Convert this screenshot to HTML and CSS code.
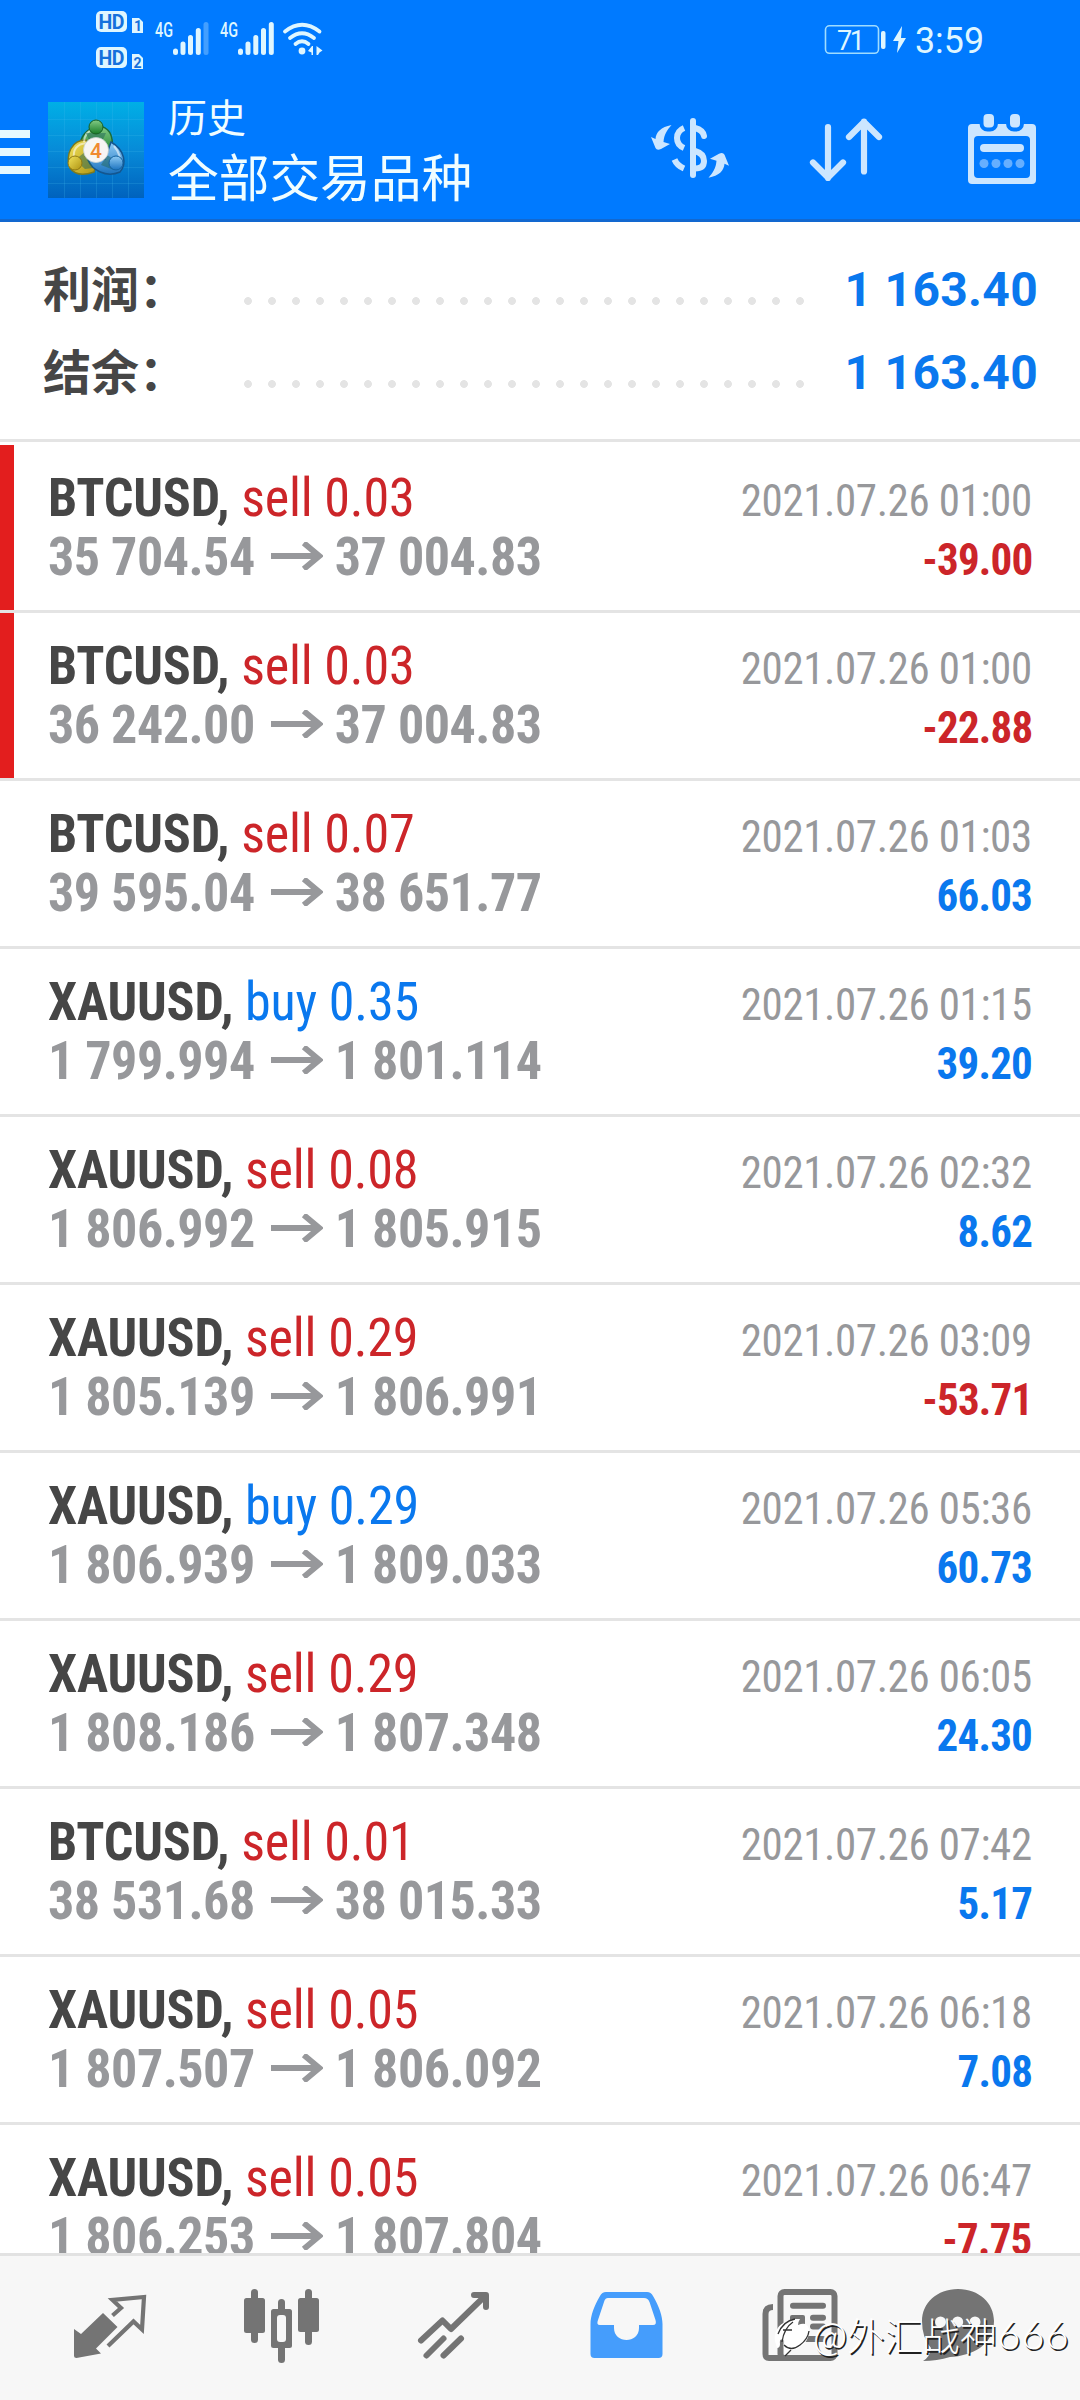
FILE: index.html
```html
<!DOCTYPE html>
<html lang="zh-CN">
<head>
<meta charset="utf-8">
<title>历史</title>
<link rel="stylesheet" href="styles.css">
</head>
<body>
<div class="screen">
<header class="top">
  <div class="status">
    <svg class="status-left" viewBox="90 0 240 80" width="240" height="80">
      <g fill="#dff6ff">
        <rect x="96" y="11" width="31" height="21" rx="5"/><path d="M132 18h7l4 4v11h-11z"/>
        <rect x="96" y="47" width="31" height="21" rx="5"/><path d="M132 54h7l4 4v11h-11z"/>
      </g>
      <g class="badge"><text x="98.500" y="28.500" textLength="26">HD</text><text x="98.500" y="64.500" textLength="26">HD</text></g>
      <g class="badge-sim"><text x="134" y="31">1</text><text x="133.500" y="67.500">2</text></g>
      <g class="net"><text x="155" y="37" textLength="18" lengthAdjust="spacingAndGlyphs">4G</text><text x="220" y="37" textLength="18" lengthAdjust="spacingAndGlyphs">4G</text></g>
      <g stroke="#dff6ff" stroke-width="5" stroke-linecap="round">
        <path d="M175.500 51v1.500M183 44v8.500M190.500 37.500v15M198.300 30.500v22"/>
        <path d="M206 24.500v28" opacity=".3"/>
        <path d="M240.500 51v1.500M248 44v8.500M255.800 37.500v15M263.500 30.500v22M271.300 24.500v28"/>
      </g>
      <g fill="none" stroke="#dff6ff" stroke-width="3.800" stroke-linecap="round">
        <path d="M285 31.500Q302 18 319.500 31.500M290 38Q302 28.500 314 38M295.500 44Q302 38.500 308.500 44"/>
      </g>
      <circle cx="302" cy="51" r="3.400" fill="#dff6ff"/>
      <path d="M313 46v9h-1.500v-2.500L308 51l4-5zM316.500 46l6 4.500-3 2-1.500 2.500h-1.500z" fill="#dff6ff"/>
    </svg>
    <svg class="status-right" viewBox="820 0 170 80" width="170" height="80">
      <rect x="825.500" y="25.800" width="53" height="27.500" rx="4" fill="none" stroke="#9fdcff" stroke-width="1.600"/>
      <rect x="881" y="31" width="4.500" height="18" rx="2" fill="#dff6ff"/>
      <path d="M902 26l-9 15h5.500l-1.500 12 9-15h-5z" fill="#dff6ff"/>
      <text class="battery" x="837" y="49.500" textLength="28">71</text>
      <text class="clock" x="915" y="53" textLength="69" lengthAdjust="spacingAndGlyphs">3:59</text>
    </svg>
  </div>
  <div class="bar">
    <div class="menu"><i></i><i></i><i></i></div>
    <svg class="logo" viewBox="0 0 96 96" width="96" height="96">
      <defs>
        <linearGradient id="sky" x1="0" y1="0" x2="0" y2="1"><stop offset="0" stop-color="#00afe6"/><stop offset=".5" stop-color="#078bd8"/><stop offset="1" stop-color="#0062bd"/></linearGradient>
        <linearGradient id="green" x1="0" y1="0" x2="0" y2="1"><stop offset="0" stop-color="#83cb86"/><stop offset="1" stop-color="#197d28"/></linearGradient>
        <linearGradient id="gold" x1="0" y1="0" x2="1" y2="1"><stop offset="0" stop-color="#f3e45b"/><stop offset="1" stop-color="#ad9212"/></linearGradient>
        <linearGradient id="azure" x1="0" y1="0" x2="0" y2="1"><stop offset="0" stop-color="#8ecbf4"/><stop offset="1" stop-color="#1c73bf"/></linearGradient>
      </defs>
      <rect width="96" height="96" fill="url(#sky)"/>
      <path d="M16.500 0v96M32.500 0v96M48.500 0v96M64.500 0v96M80.500 0v96M0 17.500h96M0 33.500h96M0 49.500h96M0 65.500h96M0 81.500h96" stroke="#45b9ee" stroke-opacity=".22"/>
      <path d="M32 49C29 25 60 14 64 37Q66 46 58 53L48 42z" fill="url(#green)" stroke="#1b6b3a" stroke-width="1.500"/>
      <path d="M38 38C24 38 17 52 22 66Q29 76 46 70L50 57z" fill="url(#gold)" stroke="#7d7a1d" stroke-width="1.500"/>
      <path d="M63 40C77 48 79 62 72 70C58 76 44 68 40 58L57 57z" fill="url(#azure)" stroke="#14568f" stroke-width="1.500"/>
      <path d="M36 40Q37 29 46 27M26 57Q24 43 38 41M66 44Q74 53 72 65" fill="none" stroke="#fff" stroke-opacity=".55" stroke-width="2"/>
      <path d="M38 31h20l-7 15H44zM27 58l10-8 8 16-8 1zM70 60l-11-7-6 10 13 5z" fill="#21665a" fill-opacity=".5"/>
      <circle cx="48" cy="25" r="7" fill="url(#green)" stroke="#176024"/>
      <circle cx="27" cy="61" r="7" fill="url(#gold)" stroke="#8f7912"/>
      <circle cx="68" cy="61" r="7" fill="url(#azure)" stroke="#1463a2"/>
      <circle cx="48" cy="48" r="12.500" fill="#f7f5f3" stroke="#c7d2d2" stroke-width=".8"/>
      <text class="logo-four" x="48" y="55.500" text-anchor="middle">4</text>
    </svg>
    <div class="titles"><div class="title">历史</div><div class="subtitle">全部交易品种</div></div>
    <svg class="tool" viewBox="640 100 100 100" width="100" height="100">
      <g fill="none" stroke="#cce6ff" stroke-width="6">
        <path d="M693 121v54" stroke-linecap="round"/>
        <path d="M684 128Q677 131 677 138T684 148M674.500 159.500Q677 165.500 684 168.500"/>
        <path d="M695 128Q703 130 704 136M695 151Q704 153.500 704 161T695 168.500" stroke-linecap="round"/>
      </g>
      <path d="M671.500 125C661 127 656 132 655.500 139L651 137L655.500 148Q657 151 661 149L670 144L663.500 142C664 135 667 130 671.500 125z" fill="#cce6ff"/>
      <path transform="rotate(180 690 151.350)" d="M671.500 125C661 127 656 132 655.500 139L651 137L655.500 148Q657 151 661 149L670 144L663.500 142C664 135 667 130 671.500 125z" fill="#cce6ff"/>
    </svg>
    <svg class="tool" viewBox="796 100 100 100" width="100" height="100">
      <path d="M828 127v51M813 162.500l15 15 15-15M864 171.500v-50M849 137l15-15 15 15" fill="none" stroke="#cce6ff" stroke-width="6.200" stroke-linecap="round" stroke-linejoin="round"/>
    </svg>
    <svg class="tool" viewBox="952 100 100 100" width="100" height="100">
      <path fill-rule="evenodd" d="M972 124h60q4 0 4 4v52q0 4-4 4h-60q-4 0-4-4v-52q0-4 4-4zM978 136q-4 0-4 4v34q0 4 4 4h48q4 0 4-4v-34q0-4-4-4z" fill="#cce6ff"/>
      <g fill="#cce6ff" stroke="#007aff" stroke-width="4"><rect x="981.500" y="112" width="14.500" height="17.500" rx="6"/><rect x="1008" y="112" width="14" height="17.500" rx="6"/></g>
      <rect x="980" y="144" width="44" height="8" rx="4" fill="#cce6ff"/>
      <g fill="#66afff"><circle cx="984" cy="163.500" r="4.500"/><circle cx="996" cy="163.500" r="4.500"/><circle cx="1008" cy="163.500" r="4.500"/><circle cx="1020" cy="163.500" r="4.500"/></g>
    </svg>
  </div>
</header>

<section class="summary">
  <div class="total"><span class="label">利润：</span><span class="dots"></span><span class="value">1 163.40</span></div>
  <div class="total"><span class="label">结余：</span><span class="dots"></span><span class="value">1 163.40</span></div>
</section>

<main class="deals">
  <article class="deal flagged"><div class="line"><span class="sym">BTCUSD, <span class="sell">sell 0.03</span></span><time>2021.07.26 01:00</time></div><div class="line"><span class="price">35 704.54<svg class="arrow" viewBox="0 0 54 28"><path d="M0 14H48M34 1L50 14L34 27"/></svg>37 004.83</span><b class="loss">-39.00</b></div></article>
  <article class="deal flagged"><div class="line"><span class="sym">BTCUSD, <span class="sell">sell 0.03</span></span><time>2021.07.26 01:00</time></div><div class="line"><span class="price">36 242.00<svg class="arrow" viewBox="0 0 54 28"><path d="M0 14H48M34 1L50 14L34 27"/></svg>37 004.83</span><b class="loss">-22.88</b></div></article>
  <article class="deal"><div class="line"><span class="sym">BTCUSD, <span class="sell">sell 0.07</span></span><time>2021.07.26 01:03</time></div><div class="line"><span class="price">39 595.04<svg class="arrow" viewBox="0 0 54 28"><path d="M0 14H48M34 1L50 14L34 27"/></svg>38 651.77</span><b class="gain">66.03</b></div></article>
  <article class="deal"><div class="line"><span class="sym">XAUUSD, <span class="buy">buy 0.35</span></span><time>2021.07.26 01:15</time></div><div class="line"><span class="price">1 799.994<svg class="arrow" viewBox="0 0 54 28"><path d="M0 14H48M34 1L50 14L34 27"/></svg>1 801.114</span><b class="gain">39.20</b></div></article>
  <article class="deal"><div class="line"><span class="sym">XAUUSD, <span class="sell">sell 0.08</span></span><time>2021.07.26 02:32</time></div><div class="line"><span class="price">1 806.992<svg class="arrow" viewBox="0 0 54 28"><path d="M0 14H48M34 1L50 14L34 27"/></svg>1 805.915</span><b class="gain">8.62</b></div></article>
  <article class="deal"><div class="line"><span class="sym">XAUUSD, <span class="sell">sell 0.29</span></span><time>2021.07.26 03:09</time></div><div class="line"><span class="price">1 805.139<svg class="arrow" viewBox="0 0 54 28"><path d="M0 14H48M34 1L50 14L34 27"/></svg>1 806.991</span><b class="loss">-53.71</b></div></article>
  <article class="deal"><div class="line"><span class="sym">XAUUSD, <span class="buy">buy 0.29</span></span><time>2021.07.26 05:36</time></div><div class="line"><span class="price">1 806.939<svg class="arrow" viewBox="0 0 54 28"><path d="M0 14H48M34 1L50 14L34 27"/></svg>1 809.033</span><b class="gain">60.73</b></div></article>
  <article class="deal"><div class="line"><span class="sym">XAUUSD, <span class="sell">sell 0.29</span></span><time>2021.07.26 06:05</time></div><div class="line"><span class="price">1 808.186<svg class="arrow" viewBox="0 0 54 28"><path d="M0 14H48M34 1L50 14L34 27"/></svg>1 807.348</span><b class="gain">24.30</b></div></article>
  <article class="deal"><div class="line"><span class="sym">BTCUSD, <span class="sell">sell 0.01</span></span><time>2021.07.26 07:42</time></div><div class="line"><span class="price">38 531.68<svg class="arrow" viewBox="0 0 54 28"><path d="M0 14H48M34 1L50 14L34 27"/></svg>38 015.33</span><b class="gain">5.17</b></div></article>
  <article class="deal"><div class="line"><span class="sym">XAUUSD, <span class="sell">sell 0.05</span></span><time>2021.07.26 06:18</time></div><div class="line"><span class="price">1 807.507<svg class="arrow" viewBox="0 0 54 28"><path d="M0 14H48M34 1L50 14L34 27"/></svg>1 806.092</span><b class="gain">7.08</b></div></article>
  <article class="deal"><div class="line"><span class="sym">XAUUSD, <span class="sell">sell 0.05</span></span><time>2021.07.26 06:47</time></div><div class="line"><span class="price">1 806.253<svg class="arrow" viewBox="0 0 54 28"><path d="M0 14H48M34 1L50 14L34 27"/></svg>1 807.804</span><b class="loss">-7.75</b></div></article>
</main>

<nav class="tabs">
  <svg viewBox="23 2256 172 144" width="172" height="144">
    <path d="M74 2329L81 2334L103 2313L117.500 2327L96 2348.500L101 2353.500L76.500 2358Q74 2358 74 2356z" fill="#747474"/>
    <path d="M112.500 2315.500L121 2308L112.500 2300L144 2297L142 2329.500L133.500 2321.500L108 2346" fill="none" stroke="#747474" stroke-width="4.200"/>
  </svg>
  <svg viewBox="195 2256 172 144" width="172" height="144">
    <g fill="#747474"><rect x="244" y="2298" width="21" height="35" rx="2.500"/><rect x="251" y="2289" width="7" height="54" rx="3.500"/><rect x="298" y="2298" width="21" height="34" rx="2.500"/><rect x="305" y="2289" width="7" height="56" rx="3.500"/><rect x="278" y="2299" width="7" height="64" rx="3.500"/><rect x="271" y="2309" width="21" height="39" rx="2.500"/></g>
    <rect x="277" y="2315" width="9" height="27" rx="3" fill="#f7f7f7"/>
  </svg>
  <svg viewBox="367 2256 172 144" width="172" height="144">
    <g fill="none" stroke="#747474" stroke-width="6"><path d="M421 2340.500L442.500 2320.500L451 2329L485 2296M474 2295H486V2307" stroke-linecap="round" stroke-linejoin="round"/><path d="M426.500 2355.500L443.500 2338.500M443.500 2355.500L461 2338.500" stroke-linecap="round"/></g>
  </svg>
  <svg viewBox="539 2256 172 144" width="172" height="144">
    <path d="M606 2292H647Q651 2292 653 2296C659 2306 662.500 2316 662.500 2324V2354Q662.500 2358 658.500 2358H594.500Q590.500 2358 590.500 2354V2324C590.500 2316 594 2306 600 2296Q602 2292 606 2292z" fill="#459dfc"/>
    <path d="M608 2298H644Q648 2298 649.500 2302L655.500 2320Q657 2325 653 2325H639V2328C639 2344 614 2344 614 2328V2325H600Q596 2325 598 2320L604 2302Q605 2298 608 2298z" fill="#f7f7f7"/>
  </svg>
  <svg viewBox="711 2256 172 144" width="172" height="144">
    <g fill="none" stroke="#747474" stroke-width="6"><rect x="780.500" y="2292" width="54" height="66" rx="4"/><path d="M773 2307Q765.500 2307 765.500 2314V2354Q765.500 2358 769 2358H785"/><path d="M793 2305.700H823M813 2317.700H823M813 2326.500H823M793 2339H823" stroke-linecap="round"/></g>
    <rect x="790" y="2315" width="15" height="16" rx="2" fill="#747474"/>
  </svg>
  <svg viewBox="883 2256 172 144" width="172" height="144">
    <path d="M958 2289C979 2289 994 2303 994 2321C994 2345 972 2356 950 2357Q937 2361 923 2361Q930 2357 931 2348Q922 2338 922 2321C922 2303 937 2289 958 2289z" fill="#747474"/>
    <g fill="#f7f7f7"><circle cx="940.500" cy="2322" r="5.500"/><circle cx="957.700" cy="2322" r="5.500"/><circle cx="975" cy="2322" r="5.500"/></g>
  </svg>
</nav>

<div class="watermark">
  <svg viewBox="772 2318 42 46" width="42" height="46">
    <path d="M776 2346C774 2332 786 2323 801 2324Q799 2327 799 2330Q808 2326 810 2334C811 2346 802 2354 792 2355L786 2361L785 2354Q784 2350 786 2346Q780 2342 781 2349Q781 2353 778 2353z" fill="#fff"/>
    <path d="M779 2339Q784 2326 796 2324M783 2347Q785 2333 794 2327M784 2335H793M785 2350Q792 2357 801 2350Q809 2344 810 2336M786 2361L792 2355" fill="none" stroke="#333" stroke-width="1.300"/>
  </svg>
  <span class="mark">@外汇战神</span><span class="mark digits">666</span>
</div>
</div>
</body>
</html>
```
FILE: styles.css
```css
* { box-sizing: border-box; }
body { margin: 0; background: #fff; font-family: Roboto, "Noto Sans CJK SC", sans-serif; }
.screen { position: relative; width: 1080px; height: 2400px; overflow: hidden; display: flex; flex-direction: column; }
svg { display: block; flex: none; }

.top { height: 222px; flex: none; background: #007aff; border-bottom: 3px solid #1268d0; }
.status { height: 80px; display: flex; justify-content: space-between; padding: 0 90px; }
.badge { font: 700 19.500px Roboto, sans-serif; fill: #1671dc; }
.badge-sim { font: 700 14px Roboto, sans-serif; fill: #1671dc; }
.net { font: 500 21px Roboto, sans-serif; fill: #dff6ff; }
.battery { font: 400 27px Roboto, sans-serif; fill: #dff6ff; }
.clock { font: 400 36.500px Roboto, sans-serif; fill: #dff6ff; }
.bar { height: 139px; display: flex; align-items: flex-start; }
.menu { width: 30px; margin-top: 50px; display: grid; gap: 10px; flex: none; }
.menu i { height: 8px; background: #e6f9ff; }
.logo { margin: 22px 24px 0 18px; }
.logo-four { font: 500 21px Roboto, sans-serif; fill: #f08a30; }
.titles { width: 472px; color: #f0fdff; font-family: "Noto Sans CJK SC", sans-serif; padding-top: 10px; flex: none; }
.title { font-size: 39px; line-height: 50px; }
.subtitle { font-size: 50.700px; line-height: 70px; }
.tool { margin: 20px 56px 0 0; }
.tool:last-child { margin-right: 0; }

.summary { height: 220px; flex: none; border-bottom: 3px solid #e4e4e4; padding: 26px 42px 0; }
.total { height: 83px; display: flex; align-items: center; }
.label { width: 193px; margin: -6px 0 0 1px; font: 700 48px/77px "Noto Sans CJK SC", sans-serif; color: #464646; }
.dots { width: 576px; height: 24px; margin-top: 23px; background: radial-gradient(circle at center, #e4e4e4 3.500px, transparent 4.300px) 0 0 / 24px 24px; }
.value { flex: 1; text-align: right; font-size: 48px; font-weight: 700; letter-spacing: .3px; color: #0a78ee; }

.deals { height: 1811px; flex: none; padding-top: 3px; overflow: hidden; }
.deal { height: 168px; border-bottom: 3px solid #e4e4e4; padding: 23px 48px 0 48px; font-family: "Roboto Condensed", Roboto, sans-serif; font-stretch: 75%; }
.flagged { background: linear-gradient(#e31e1e, #e31e1e) 0 0 / 14px 100% no-repeat; }
.line { height: 59px; line-height: 59px; display: flex; justify-content: space-between; align-items: baseline; white-space: nowrap; }
.sym, .price { font-size: 54px; font-weight: 700; transform: scaleX(.965); transform-origin: 0 50%; }
.sym { color: #464646; letter-spacing: -.2px; }
.sell, .buy { font-weight: 400; }
.sell, .loss { color: #cc2529; }
.buy, .gain { color: #0a78ee; }
.price { color: #97989b; letter-spacing: -.55px; }
.arrow { display: inline-block; width: 54px; height: 28px; margin: 0 12px 0 17px; vertical-align: 5px; }
.arrow path { fill: none; stroke: #97989b; stroke-width: 6; }
.line time, .line b { font-size: 45px; transform: scaleX(.955); transform-origin: 100% 50%; }
.line time { color: #97989b; letter-spacing: -.4px; }
.line b { letter-spacing: -.8px; }

.tabs { height: 147px; flex: none; border-top: 3px solid #e2e2e2; background: #f7f7f7; display: flex; padding-left: 23px; }

.watermark { position: absolute; left: 771px; top: 2309px; display: flex; align-items: center; height: 54px; color: #fff; }
.mark { font: 300 37.500px/50px "Noto Sans CJK SC", sans-serif; margin-bottom: 4px; text-shadow: 1.500px 1.500px 0 #222; }
.digits { font: 300 40px/50px Lato, sans-serif; letter-spacing: 1px; }
```
